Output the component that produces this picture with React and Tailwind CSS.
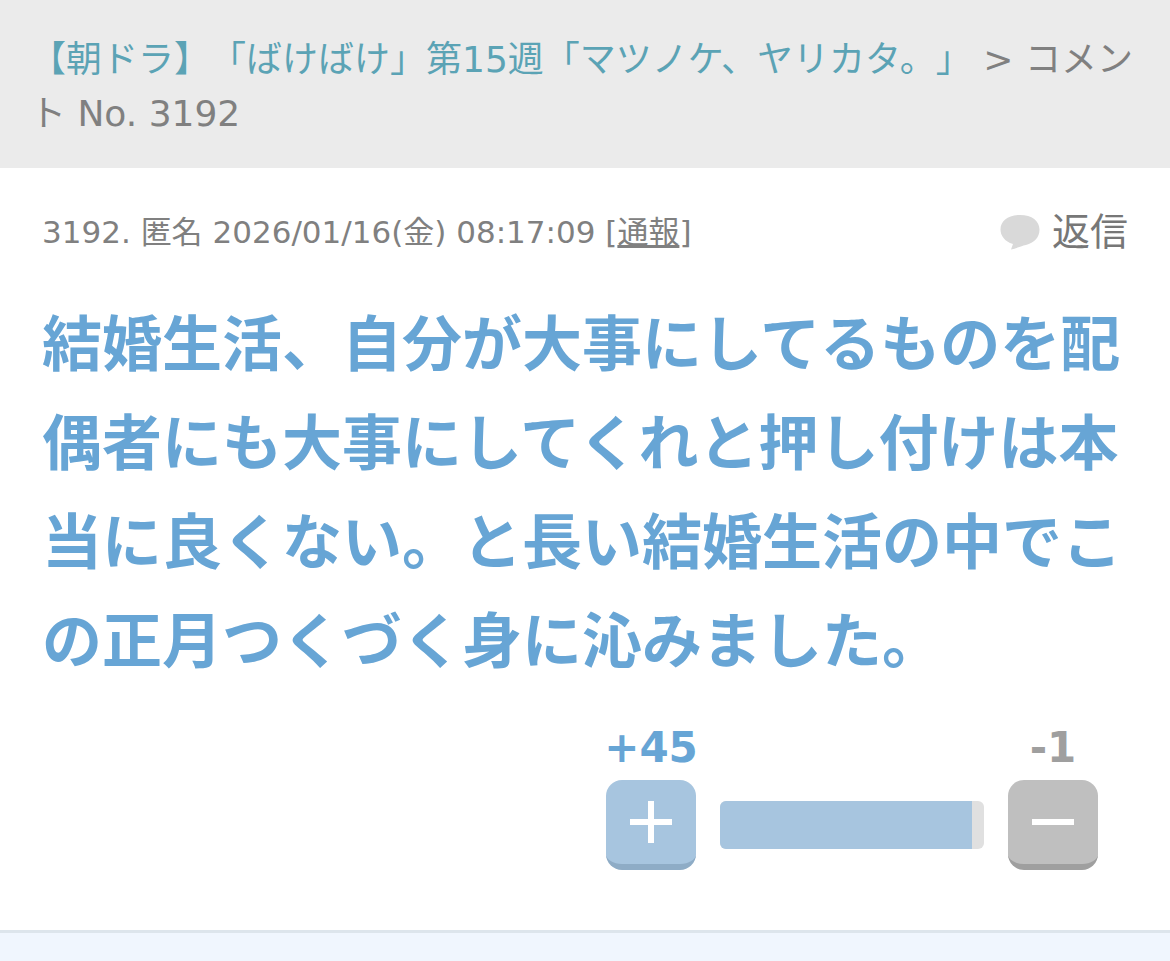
import React, { useState } from 'react';

const TOPIC = '【朝ドラ】「ばけばけ」第15週「マツノケ、ヤリカタ。」';

const comment = {
  no: 3192,
  name: '匿名',
  date: '2026/01/16(金) 08:17:09',
  body: '結婚生活、自分が大事にしてるものを配偶者にも大事にしてくれと押し付けは本当に良くない。と長い結婚生活の中でこの正月つくづく身に沁みました。',
  plus: 45,
  minus: 1,
};

const BalloonIcon = () => (
  <svg className="w-10 h-9 fill-[#d9d9d9]" viewBox="0 0 40 36" aria-hidden="true">
    <path d="M20 1C8 1 .5 7 .5 15.500c0 6 4 12 12.500 14.500l-2 5.500C16 34.500 21 32 26 31 34 29 39.500 23.500 39.500 15.500 39.500 7 32 1 20 1z" />
  </svg>
);

const Header = () => (
  <header className="bg-[#ebebeb] px-[30px] pt-[33px] pb-[27px] text-4xl leading-[54px] text-[#808080]">
    <a href="#topic" className="text-[#5ba3b5]">{TOPIC}</a>
    {' '}&gt; コメント No. {comment.no}
  </header>
);

const VoteBar = () => {
  const [vote, setVote] = useState(null);
  const plus = comment.plus + (vote === 'plus' ? 1 : 0);
  const minus = comment.minus + (vote === 'minus' ? 1 : 0);
  // the minus side never gets thinner than a visible sliver
  const rate = Math.min(95.5, (plus / (plus + minus)) * 100);

  return (
    <div className="flex justify-end items-end gap-6 pr-[30px] mt-8">
      <div className="w-[90px] flex flex-col items-center">
        <p className="text-[42px] leading-[48px] font-bold text-[#67a5d5]">+{plus}</p>
        <button
          type="button"
          aria-label="プラス"
          onClick={() => setVote('plus')}
          className="mt-2 w-full h-[90px] rounded-2xl bg-[#a7c5df] border-b-6 border-[#8eacc6] flex items-center justify-center"
        >
          <svg className="w-11 h-11 stroke-white" viewBox="0 0 44 44" strokeWidth="6" aria-hidden="true">
            <path d="M1 22h42M22 1v42" />
          </svg>
        </button>
      </div>
      <div className="w-[264px] h-12 mb-[21px] rounded-md overflow-hidden bg-[#e0e0e0]">
        <div className="h-full bg-[#a7c5df]" style={{ width: `${rate}%` }} />
      </div>
      <div className="w-[90px] flex flex-col items-center">
        <p className="text-[42px] leading-[48px] font-bold text-[#9f9f9f]">-{minus}</p>
        <button
          type="button"
          aria-label="マイナス"
          onClick={() => setVote('minus')}
          className="mt-2 w-full h-[90px] rounded-2xl bg-[#bfbfbf] border-b-6 border-[#9f9f9f] flex items-center justify-center"
        >
          <svg className="w-11 h-11 stroke-white" viewBox="0 0 44 44" strokeWidth="6" aria-hidden="true">
            <path d="M1 22h42" />
          </svg>
        </button>
      </div>
    </div>
  );
};

const App = () => {
  return (
    <div className="min-h-screen flex flex-col bg-white font-['DejaVu_Sans','Noto_Sans_CJK_JP',sans-serif] [text-spacing-trim:space-all]" lang="ja">
      <Header />
      <main className="px-[42px] pt-9 pb-[60px]">
        <div className="flex items-center justify-between">
          <p className="text-[31px] leading-[56px] text-[#808080]">
            {comment.no}. {comment.name} {comment.date} [<a href="#report" className="underline">通報</a>]
          </p>
          <a href="#reply" className="flex items-center gap-3 text-[38px] leading-[56px] text-[#777]">
            <BalloonIcon />
            返信
          </a>
        </div>
        <p className="mt-9 text-6xl leading-[99px] font-bold text-[#67a5d5]">{comment.body}</p>
        <VoteBar />
      </main>
      <div className="grow bg-[#f0f6fe] border-t-3 border-[#dde5ec]" />
    </div>
  );
};

export default App;
